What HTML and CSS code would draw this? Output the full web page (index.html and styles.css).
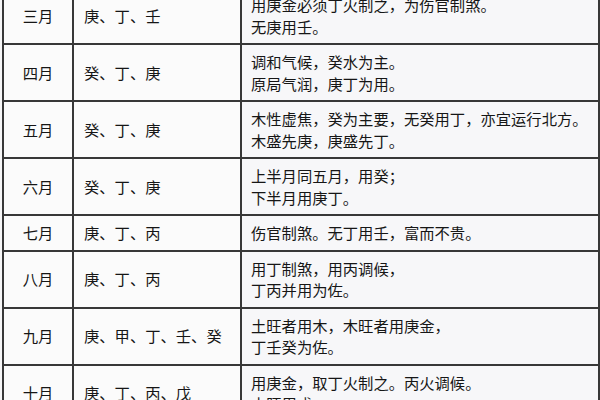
FILE: index.html
```html
<!DOCTYPE html>
<html lang="zh">
<head>
<meta charset="utf-8">
<link rel="stylesheet" href="styles.css">
</head>
<body>
<table class="grid">
  <colgroup>
    <col class="c-month">
    <col class="c-gods">
    <col class="c-note">
  </colgroup>
  <tbody>
    <tr><td class="month">三月</td><td class="gods">庚、丁、壬</td><td class="note">用庚金必须丁火制之，为伤官制煞。<br>无庚用壬。</td></tr>
    <tr><td class="month">四月</td><td class="gods">癸、丁、庚</td><td class="note">调和气候，癸水为主。<br>原局气润，庚丁为用。</td></tr>
    <tr><td class="month">五月</td><td class="gods">癸、丁、庚</td><td class="note">木性虚焦，癸为主要，无癸用丁，亦宜运行北方。<br>木盛先庚，庚盛先丁。</td></tr>
    <tr><td class="month">六月</td><td class="gods">癸、丁、庚</td><td class="note">上半月同五月，用癸；<br>下半月用庚丁。</td></tr>
    <tr><td class="month">七月</td><td class="gods">庚、丁、丙</td><td class="note">伤官制煞。无丁用壬，富而不贵。</td></tr>
    <tr><td class="month">八月</td><td class="gods">庚、丁、丙</td><td class="note">用丁制煞，用丙调候，<br>丁丙并用为佐。</td></tr>
    <tr><td class="month">九月</td><td class="gods">庚、甲、丁、壬、癸</td><td class="note">土旺者用木，木旺者用庚金，<br>丁壬癸为佐。</td></tr>
    <tr><td class="month">十月</td><td class="gods">庚、丁、丙、戊</td><td class="note">用庚金，取丁火制之。丙火调候。<br>水旺用戊。</td></tr>
  </tbody>
</table>
</body>
</html>
```

FILE: styles.css
```css
html, body {
  margin: 0;
  padding: 0;
  background: #f6f6f7;
  overflow: hidden;
}
body {
  font-family: "Noto Sans CJK SC", "Noto Sans", sans-serif;
  color: #161616;
  font-size: 15.3px;
  line-height: 21.5px;
}
.grid {
  border-collapse: collapse;
  table-layout: fixed;
  width: 596px;
  margin: -14px 0 0 2px;
  background: #fbfbfb;
}
.c-month { width: 70px; }
.c-gods { width: 168px; }
.c-note { width: 358px; }
.grid td {
  border: 2px solid #383838;
  padding: 6px 0;
  vertical-align: middle;
  white-space: nowrap;
}
.month {
  text-align: center;
}
.gods {
  padding-left: 10px !important;
}
.note {
  padding-left: 9px !important;
  background: #f7f7f9;
}
```
